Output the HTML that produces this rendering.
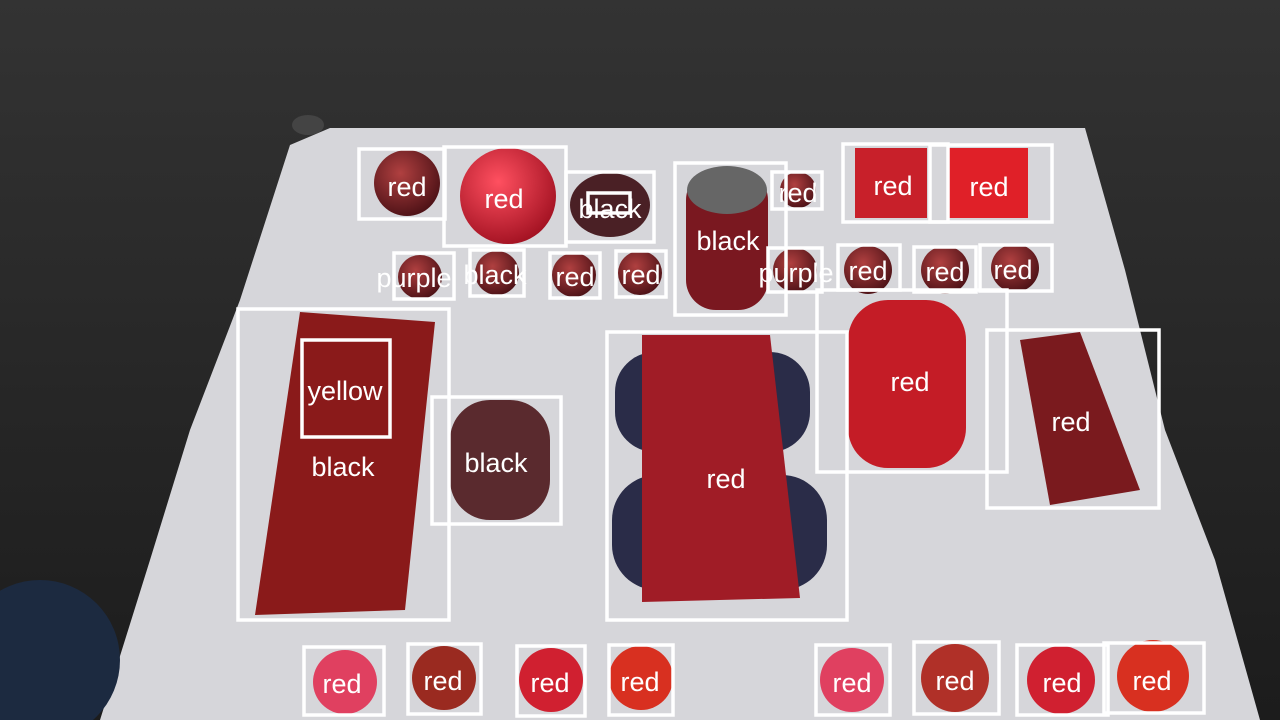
<!DOCTYPE html>
<html><head><meta charset="utf-8"><style>
html,body{margin:0;padding:0;width:1280px;height:720px;overflow:hidden;background:#222}
svg{display:block}
text{font-family:"Liberation Sans","DejaVu Sans",sans-serif;font-size:27px;fill:#fff;text-anchor:middle}
.b{fill:none;stroke:#fff;stroke-width:3.5}
</style></head><body>
<svg width="1280" height="720" viewBox="0 0 1280 720">
<defs>
<linearGradient id="bg" x1="0" y1="0" x2="0" y2="1"><stop offset="0" stop-color="#333"/><stop offset="1" stop-color="#1c1c1c"/></linearGradient>
<radialGradient id="ap" cx="0.4" cy="0.35" r="0.7"><stop offset="0" stop-color="#ff5060"/><stop offset="1" stop-color="#a01020"/></radialGradient>
<radialGradient id="dk" cx="0.4" cy="0.35" r="0.7"><stop offset="0" stop-color="#b04040"/><stop offset="1" stop-color="#4a1015"/></radialGradient>
</defs>
<rect width="1280" height="720" fill="url(#bg)"/>
<polygon points="330,128 640,128 690,128 1085,128 1125,270 1165,430 1215,560 1260,720 100,720 150,560 190,430 240,300 290,145" fill="#d6d6da"/>
<ellipse cx="40" cy="660" rx="80" ry="80" fill="#1c2a40"/>
<ellipse cx="308" cy="125" rx="16" ry="10" fill="#444"/>
<!-- objects -->
<circle cx="407" cy="183" r="33" fill="url(#dk)"/>
<circle cx="508" cy="196" r="48" fill="url(#ap)"/>
<ellipse cx="610" cy="205" rx="40" ry="32" fill="#4a2025"/>
<rect x="686" y="170" width="82" height="140" rx="30" fill="#7a1820"/>
<ellipse cx="727" cy="190" rx="40" ry="24" fill="#666"/>
<circle cx="798" cy="190" r="18" fill="url(#dk)"/>
<rect x="855" y="148" width="72" height="70" fill="#c8202a"/>
<rect x="948" y="148" width="80" height="70" fill="#e02028"/>
<circle cx="420" cy="277" r="22" fill="url(#dk)"/><circle cx="497" cy="273" r="22" fill="url(#dk)"/>
<circle cx="574" cy="275" r="22" fill="url(#dk)"/><circle cx="640" cy="273" r="22" fill="url(#dk)"/>
<circle cx="795" cy="270" r="22" fill="url(#dk)"/><circle cx="868" cy="270" r="24" fill="url(#dk)"/>
<circle cx="945" cy="270" r="24" fill="url(#dk)"/><circle cx="1015" cy="268" r="24" fill="url(#dk)"/>
<polygon points="300,312 435,322 405,610 255,615" fill="#8a1a1a"/>
<rect x="450" y="400" width="100" height="120" rx="40" fill="#5a2a2e"/>
<rect x="615" y="352" width="195" height="100" rx="40" fill="#2a2c48"/>
<rect x="612" y="475" width="215" height="115" rx="45" fill="#2a2c48"/>
<polygon points="642,335 770,335 800,598 642,602" fill="#a01c26"/>
<rect x="848" y="300" width="118" height="168" rx="40" fill="#c41c26"/>
<polygon points="1020,340 1080,332 1140,490 1050,505" fill="#7a1a1e"/>
<circle cx="345" cy="682" r="32" fill="#e04060"/><circle cx="444" cy="678" r="32" fill="#9a2a20"/>
<circle cx="551" cy="680" r="32" fill="#d02030"/><circle cx="641" cy="678" r="32" fill="#d83020"/>
<circle cx="852" cy="680" r="32" fill="#e04060"/><circle cx="955" cy="678" r="34" fill="#b03028"/>
<circle cx="1061" cy="680" r="34" fill="#d02030"/><circle cx="1153" cy="676" r="36" fill="#d83020"/>
<!-- boxes -->
<rect class="b" x="359" y="149" width="86" height="70"/><text x="407" y="196">red</text>
<rect class="b" x="444" y="147" width="122" height="99"/><text x="504" y="208">red</text>
<rect class="b" x="566" y="172" width="88" height="70"/><rect class="b" x="588" y="193" width="42" height="20"/><text x="610" y="218">black</text>
<rect class="b" x="675" y="163" width="111" height="152"/><text x="728" y="250">black</text>
<rect class="b" x="772" y="172" width="50" height="37"/><text x="798" y="202">red</text>
<rect class="b" x="843" y="144" width="105" height="78"/><text x="893" y="195">red</text>
<rect class="b" x="930" y="145" width="122" height="77"/><text x="989" y="196">red</text>
<rect class="b" x="394" y="253" width="60" height="46"/><text x="414" y="287">purple</text>
<rect class="b" x="470" y="250" width="54" height="46"/><text x="495" y="284">black</text>
<rect class="b" x="550" y="253" width="50" height="45"/><text x="575" y="286">red</text>
<rect class="b" x="616" y="251" width="50" height="46"/><text x="641" y="284">red</text>
<rect class="b" x="768" y="248" width="54" height="44"/><text x="796" y="282">purple</text>
<rect class="b" x="838" y="245" width="62" height="45"/><text x="868" y="280">red</text>
<rect class="b" x="914" y="247" width="62" height="45"/><text x="945" y="281">red</text>
<rect class="b" x="980" y="245" width="72" height="46"/><text x="1013" y="279">red</text>
<rect class="b" x="238" y="309" width="211" height="311"/><text x="343" y="476">black</text>
<rect class="b" x="302" y="340" width="88" height="97"/><text x="345" y="400">yellow</text>
<rect class="b" x="432" y="397" width="129" height="127"/><text x="496" y="472">black</text>
<rect class="b" x="607" y="332" width="240" height="288"/><text x="726" y="488">red</text>
<rect class="b" x="817" y="290" width="190" height="182"/><text x="910" y="391">red</text>
<rect class="b" x="987" y="330" width="172" height="178"/><text x="1071" y="431">red</text>
<rect class="b" x="304" y="647" width="80" height="68"/><text x="342" y="693">red</text>
<rect class="b" x="408" y="644" width="73" height="70"/><text x="443" y="690">red</text>
<rect class="b" x="517" y="646" width="68" height="70"/><text x="550" y="692">red</text>
<rect class="b" x="609" y="645" width="64" height="70"/><text x="640" y="691">red</text>
<rect class="b" x="816" y="645" width="74" height="70"/><text x="852" y="692">red</text>
<rect class="b" x="914" y="642" width="85" height="72"/><text x="955" y="690">red</text>
<rect class="b" x="1017" y="645" width="91" height="70"/><text x="1062" y="692">red</text>
<rect class="b" x="1104" y="643" width="100" height="70"/><text x="1152" y="690">red</text>
</svg>
</body></html>
